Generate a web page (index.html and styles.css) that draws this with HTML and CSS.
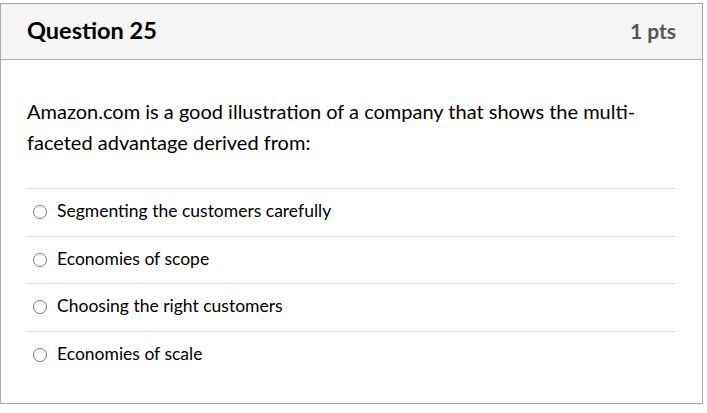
FILE: index.html
```html
<!DOCTYPE html>
<html>
<head>
<meta charset="utf-8">
<link rel="stylesheet" href="styles.css">
</head>
<body>
<div class="card">
  <div class="card-header">
    <h2 class="title">Question 25</h2>
    <span class="pts">1 pts</span>
  </div>
  <div class="card-body">
    <p class="question">Amazon.com is a good illustration of a company that shows the multi-faceted advantage derived from:</p>
    <div class="answers">
      <label class="answer"><span class="radio"></span><span class="answer-text">Segmenting the customers carefully</span></label>
      <label class="answer"><span class="radio"></span><span class="answer-text">Economies of scope</span></label>
      <label class="answer"><span class="radio"></span><span class="answer-text">Choosing the right customers</span></label>
      <label class="answer"><span class="radio"></span><span class="answer-text">Economies of scale</span></label>
    </div>
  </div>
</div>
</body>
</html>
```
FILE: styles.css
```css
html, body {
  margin: 0;
  padding: 0;
  background: #ffffff;
}
body {
  font-family: Lato, "Liberation Sans", sans-serif;
  color: #2d3b45;
}
.card {
  margin-top: 3px;
  width: 701px;
  height: 399px;
  border: 1px solid #aaaaaa;
  background: #ffffff;
}
.card-header {
  height: 56px;
  box-sizing: border-box;
  background: #f5f5f5;
  border-bottom: 1px solid #aaaaaa;
  display: flex;
  align-items: center;
  justify-content: space-between;
  padding: 0 26px 3px 26px;
}
.title {
  margin: 0;
  font-size: 23.5px;
  font-weight: 700;
  color: #000000;
}
.pts {
  font-size: 21px;
  font-weight: 700;
  color: #555555;
}
.card-body {
  padding: 36px 26px 0 26px;
}
.question {
  margin: 0;
  font-size: 20px;
  line-height: 31px;
  color: #000000;
  padding-right: 30px;
}
.answers {
  margin-top: 30px;
  border-top: 1px solid #dddddd;
}
.answer {
  display: flex;
  align-items: center;
  height: 46.5px;
  border-bottom: 1px solid #dddddd;
  gap: 10px;
  padding-left: 6px;
}
.answer:last-child {
  border-bottom: none;
}
.radio {
  width: 12px;
  height: 12px;
  border: 1px solid #777777;
  border-radius: 50%;
  background: #ffffff;
  flex: none;
}
.answer-text {
  font-size: 17.5px;
  line-height: 20px;
  color: #000000;
  margin-bottom: 2px;
}
```
